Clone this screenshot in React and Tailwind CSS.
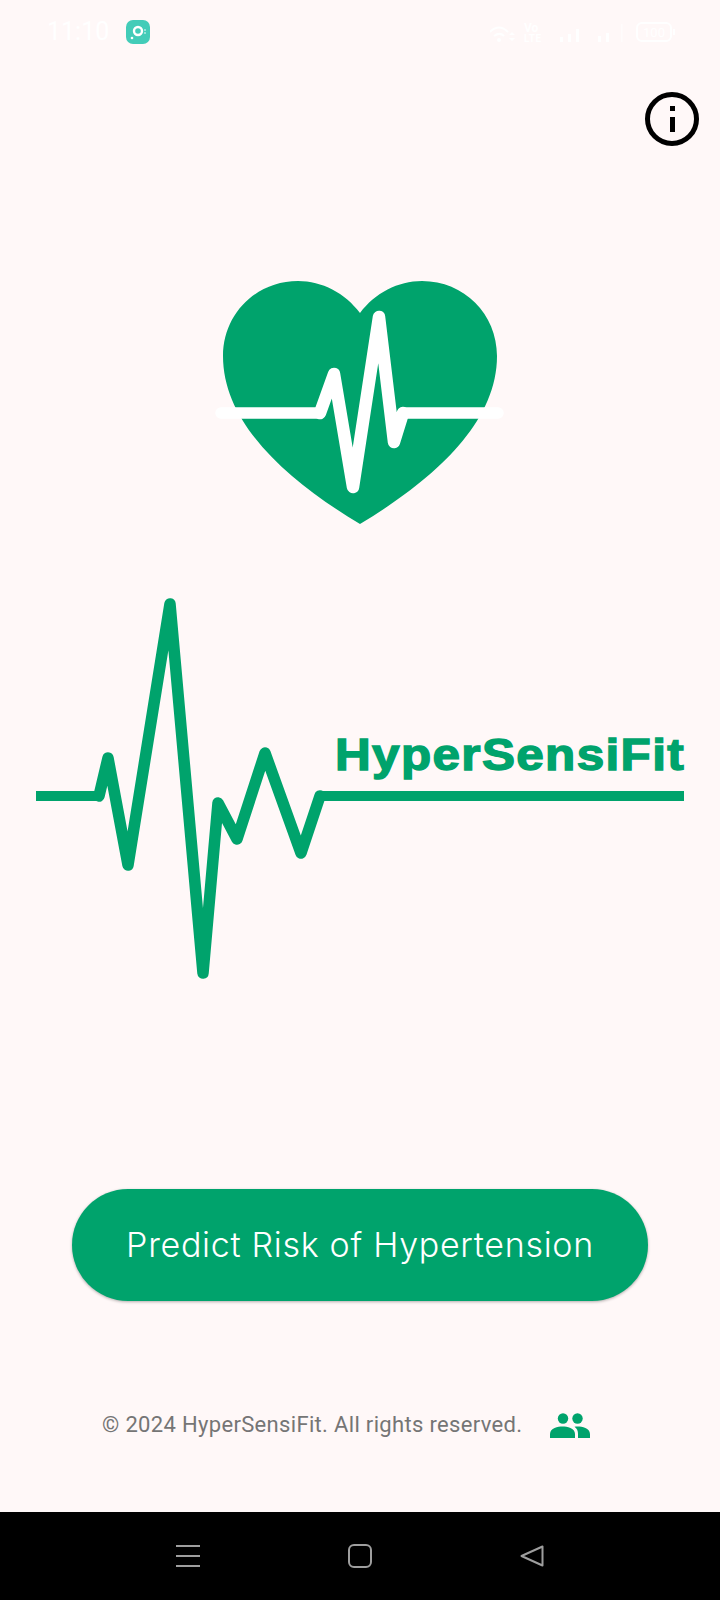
import React from "react";

const GREEN = "#00a36c";

function Heart() {
  return (
    <svg width="290" height="250" viewBox="215 278 290 250" className="block">
      <path
        d="M360 313C345 293 322 281 298 281C256 281 223 314 223 356C223 425 290 482 360 524C430 482 497 425 497 356C497 314 464 281 422 281C398 281 375 293 360 313Z"
        fill={GREEN}
      />
      <path d="M221 413H320M403 413H498" fill="none" stroke="#fff" strokeWidth="11.5" strokeLinecap="round" />
      <path
        d="M320 413L334 374L353 487L379 317L394 442L403 413"
        fill="none"
        stroke="#fff"
        strokeWidth="12.5"
        strokeLinecap="round"
        strokeLinejoin="round"
      />
    </svg>
  );
}

function Ecg() {
  return (
    <svg width="650" height="390" viewBox="35 595 650 390" className="block">
      <path d="M36 796H99M320 796H684" fill="none" stroke={GREEN} strokeWidth="10" />
      <path
        d="M99 796L108 758L128 865L170 604L203 973L218 803L237 839L265 753L301 853L320 796"
        fill="none"
        stroke={GREEN}
        strokeWidth="11.5"
        strokeLinecap="round"
        strokeLinejoin="round"
      />
    </svg>
  );
}

function StatusBar() {
  return (
    <div className="h-[72px] pl-[47px] pr-[44px] pt-[20px] flex items-start justify-between">
      <div className="flex items-center gap-[18px] h-[24px]">
        <span className="text-[25px] leading-[24px] text-white w-[61px] whitespace-nowrap [font-family:Roboto,sans-serif]">11:10</span>
        <svg width="24" height="24" viewBox="0 0 24 24" className="block">
          <rect width="24" height="24" rx="7" fill="#43ccb8" />
          <circle cx="12" cy="11" r="4" fill="none" stroke="#fff" strokeWidth="2.4" />
          <circle cx="6" cy="18" r="1.3" fill="#fff" />
          <circle cx="19" cy="10" r="1" fill="#fff" opacity="0.6" />
          <circle cx="19" cy="13" r="1" fill="#fff" opacity="0.6" />
        </svg>
      </div>
      <svg width="186" height="24" viewBox="490 20 186 24" className="block" fill="#fff">
        <path d="M490 32C496 26 502 26 508 32M494 36C498 33 501 33 504 36" fill="none" stroke="#fff" strokeWidth="2" />
        <circle cx="499" cy="40" r="2" />
        <path d="M509 35L512 32L515 35ZM509 38L512 41L515 38Z" />
        <text x="524" y="32" fontSize="12" fontWeight="700" fontFamily="Roboto, sans-serif" fill="#fff">Vo</text>
        <text x="524" y="42" fontSize="10" fontWeight="700" letterSpacing="0.5" fontFamily="Roboto, sans-serif" fill="#fff">LTE</text>
        <rect x="560" y="37" width="3" height="5" />
        <rect x="568" y="34" width="3" height="8" />
        <rect x="576" y="29" width="3" height="13" />
        <rect x="598" y="36" width="3" height="6" />
        <rect x="606" y="33" width="3" height="9" />
        <rect x="621" y="24" width="1.5" height="18" opacity="0.5" />
        <rect x="637" y="23" width="34" height="18" rx="5" fill="none" stroke="#fff" strokeWidth="2" />
        <rect x="673" y="29" width="2" height="6" />
        <text x="654" y="37" textAnchor="middle" fontSize="13" fontFamily="Roboto, sans-serif" fill="#fff">100</text>
      </svg>
    </div>
  );
}

function NavBar() {
  return (
    <div className="h-[88px] bg-black flex items-start pt-[32px] pl-[176px] gap-[148px]">
      <div className="w-[24px] h-[24px] flex flex-col justify-between py-[1px]">
        <span className="h-[2px] bg-[#9e9e9e]"></span>
        <span className="h-[2px] bg-[#9e9e9e]"></span>
        <span className="h-[2px] bg-[#9e9e9e]"></span>
      </div>
      <div className="w-[24px] h-[24px] rounded-[6px] border-[2px] border-[#9e9e9e]"></div>
      <svg width="24" height="24" viewBox="0 0 24 24" className="block">
        <path d="M22.5 2.5V21.5L1.5 12Z" fill="none" stroke="#9e9e9e" strokeWidth="2" strokeLinejoin="round" />
      </svg>
    </div>
  );
}

export default function App() {
  return (
    <div className="w-[720px] h-[1600px] bg-[#fff8f8] flex flex-col overflow-hidden">
      <StatusBar />
      <div className="flex justify-end pr-[21px] pt-[20px]">
        <div className="w-[54px] h-[54px] rounded-full border-[5px] border-black flex flex-col items-center justify-center gap-[6px]">
          <span className="w-[5px] h-[5px] bg-black"></span>
          <span className="w-[5px] h-[15px] bg-black"></span>
        </div>
      </div>
      <div className="flex justify-start pl-[215px] pt-[132px]">
        <Heart />
      </div>
      <div className="relative pl-[35px] pt-[67px]">
        <Ecg />
        <span className="absolute left-[335px] top-[200px] origin-left scale-x-[1.1] text-[45px] leading-[54px] font-bold tracking-[1.2px] whitespace-nowrap text-[#00a36c] [font-family:'Liberation_Sans',sans-serif] [-webkit-text-stroke:1.4px_#00a36c]">
          HyperSensiFit
        </span>
      </div>
      <div className="flex justify-center pt-[204px]">
        <div className="w-[576px] h-[112px] rounded-full bg-[#00a36c] shadow-[0_1px_3px_rgba(0,0,0,0.3)] flex items-center justify-center text-white text-[34px] tracking-[0.7px] font-[350] [font-family:Inter,sans-serif]">
          Predict Risk of Hypertension
        </div>
      </div>
      <div className="flex items-center pl-[102px] pt-[98px] h-[212px] pb-[60px]">
        <span className="text-[22px] pb-[2px] tracking-[0.33px] text-[#757575] whitespace-nowrap w-[448px] [font-family:Roboto,sans-serif]">
          © 2024 HyperSensiFit. All rights reserved.
        </span>
        <svg width="40" height="25" viewBox="0 0 40 25" fill={GREEN} className="block">
          <circle cx="13" cy="5.5" r="5.2" />
          <circle cx="27.5" cy="5.5" r="5.2" />
          <path d="M0 25V21C0 15 8 13.5 12.5 13.5C17 13.5 25 15 25 21V25Z" />
          <path d="M27.5 13.5C32 13.5 40 15 40 21V25H28V21C28 18 27 15.5 24.5 13.8C25.5 13.6 26.5 13.5 27.5 13.5Z" />
        </svg>
      </div>
      <NavBar />
    </div>
  );
}
